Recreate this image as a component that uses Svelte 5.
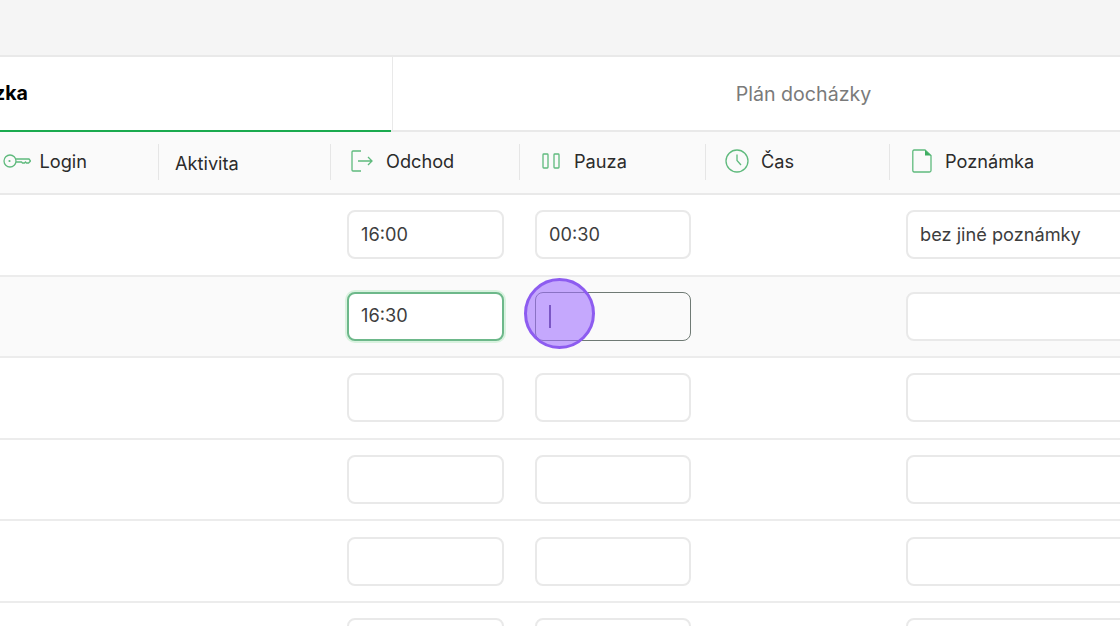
<script>
    const rows = [
        { odchod: '16:00', pauza: '00:30', note: 'bez jiné poznámky' },
        { odchod: '16:30', pauza: '', note: '', active: true },
        { odchod: '', pauza: '', note: '' },
        { odchod: '', pauza: '', note: '' },
        { odchod: '', pauza: '', note: '' },
        { odchod: '', pauza: '', note: '' }
    ];
</script>

<div class="page">
    <div class="topbar"></div>

    <div class="tabs">
        <div class="tab current"><span>Docházka</span></div>
        <div class="tab other">Plán docházky</div>
    </div>

    <div class="head cols">
        <div class="hcell login">
            <svg width="28" height="14" viewBox="0 0 28 14" fill="none" stroke="#5fba7d" stroke-width="1.3">
                <circle cx="7" cy="7" r="6" />
                <circle cx="6.500" cy="7" r="1.100" fill="#5fba7d" stroke="none" />
                <path d="M13 5H26L27.500 7L25.500 9H23.500L22.500 8L21.500 9H19.500L18.500 8H13" />
            </svg>
            <span>Login</span>
        </div>
        <div class="hcell aktivita"><span>Aktivita</span></div>
        <div class="hcell odchod">
            <svg width="22" height="22" viewBox="0 0 22 22" fill="none" stroke="#5fba7d" stroke-width="1.300">
                <path d="M10 1H2A1 1 0 0 0 1 2V20A1 1 0 0 0 2 21H10" />
                <path d="M7 11H21M17 7L21 11L17 15" />
            </svg>
            <span>Odchod</span>
        </div>
        <div class="hcell pauza">
            <svg width="18" height="16" viewBox="0 0 18 16" fill="none" stroke="#5fba7d" stroke-width="1.300">
                <rect x="1" y="1" width="5" height="14" rx="0.800" />
                <rect x="12" y="1" width="5" height="14" rx="0.800" />
            </svg>
            <span>Pauza</span>
        </div>
        <div class="hcell cas">
            <svg width="24" height="24" viewBox="0 0 24 24" fill="none" stroke="#5fba7d" stroke-width="1.300">
                <circle cx="12" cy="12" r="11" />
                <path d="M12 5.500V11.500L16 16" />
            </svg>
            <span>Čas</span>
        </div>
        <div class="hcell poznamka">
            <svg width="20" height="24" viewBox="0 0 20 24" fill="none" stroke="#5fba7d" stroke-width="1.300">
                <path d="M13 1H2A1.500 1.500 0 0 0 .8 2.500V21.500A1.500 1.500 0 0 0 2 23H17.500A1.500 1.500 0 0 0 19 21.500V6.500Z" />
                <path d="M13 1L19 6.500H13Z" fill="#3fae62" stroke="none" />
            </svg>
            <span>Poznámka</span>
        </div>
    </div>

    {#each rows as row}
        <div class="row cols" class:active={row.active}>
            <div></div>
            <div></div>
            <div class="cell">
                <input class="field" class:ok={row.active} value={row.odchod} readonly aria-label="Odchod" />
            </div>
            <div class="cell cell-pauza">
                <input class="field" class:focus={row.active} value={row.pauza} readonly aria-label="Pauza" />
                {#if row.active}
                    <span class="caret"></span>
                    <span class="click"></span>
                {/if}
            </div>
            <div></div>
            <div class="cell cell-note">
                <input class="field" value={row.note} readonly aria-label="Poznámka" />
            </div>
        </div>
    {/each}
</div>

<style>
    :global(body) {
        margin: 0;
        background: #fff;
    }

    .page {
        width: 1120px;
        height: 626px;
        overflow: hidden;
        font-family: Inter, "Liberation Sans", sans-serif;
        font-size: 18.2px;
        color: #2b2b2b;
    }

    .topbar {
        height: 55px;
        background: #f5f5f5;
        border-bottom: 2px solid #e9e9e9;
    }

    .tabs {
        display: flex;
        height: 73px;
    }

    .tab {
        display: flex;
        align-items: center;
        justify-content: center;
        color: #7a7a7a;
        font-size: 19.6px;
    }

    .tab.other {
        flex: 0 0 821px;
    }

    .tab.current {
        flex: 0 0 393px;
        justify-content: flex-end;
        overflow: hidden;
        padding-bottom: 1px;
        border-right: 1.5px solid #e9e9e9;
        box-sizing: border-box;
        color: #000;
        font-weight: 700;
    }

    .tab.current span {
        margin-right: 364px;
        white-space: nowrap;
    }

    .cols {
        display: grid;
        grid-template-columns: 158px 172px 189px 186px 184px 1fr;
    }

    .head {
        height: 61px;
        background: #fafafa;
        border-top: 2px solid #e9e9e9;
        border-bottom: 2px solid #e9e9e9;
        position: relative;
    }

    .head::before {
        content: "";
        position: absolute;
        left: 0;
        top: -2px;
        width: 391px;
        height: 2px;
        background: #1aaa4f;
    }

    .hcell {
        display: flex;
        align-items: center;
        margin: 12px 0 13px;
        padding-bottom: 2px;
        box-sizing: border-box;
        border-left: 1.5px solid #e6e6e6;
        white-space: nowrap;
    }

    .hcell svg {
        flex: none;
    }

    .login {
        border-left: none;
        padding-left: 3px;
        gap: 8.5px;
    }

    .aktivita {
        padding-left: 16px;
        padding-top: 2px;
        padding-bottom: 0;
    }

    .odchod {
        padding-left: 20px;
        gap: 13px;
    }

    .pauza {
        padding-left: 22px;
        gap: 14px;
    }

    .cas {
        padding-left: 19px;
        gap: 12px;
    }

    .poznamka {
        padding-left: 22px;
        gap: 13px;
    }

    .row {
        height: 81.6px;
        box-sizing: border-box;
        border-bottom: 2px solid #ececec;
        align-items: center;
    }

    .row.active {
        background: #fafafa;
    }

    .cell {
        position: relative;
        padding: 0 15px 0 17px;
    }

    .cell-pauza {
        padding: 0 14px 0 16px;
    }

    .cell-note {
        padding-right: 0;
        width: 320px;
    }

    .field {
        display: block;
        width: 100%;
        height: 49px;
        box-sizing: border-box;
        padding: 0 12px 2px;
        border: 2px solid #e9e9e9;
        border-radius: 8px;
        background: #fff;
        font: inherit;
        color: #3d3d3d;
        outline: none;
    }

    .field.ok {
        border-color: #6db88a;
        box-shadow: 0 0 0 2px #d9f2df;
    }

    .field.focus {
        background: #fafafa;
        border: 1.5px solid #6f7a74;
    }

    .caret {
        position: absolute;
        left: 30px;
        top: 13px;
        width: 1.5px;
        height: 23px;
        background: #4b3a75;
    }

    .click {
        position: absolute;
        left: 5px;
        top: -14px;
        width: 71px;
        height: 71px;
        box-sizing: border-box;
        border: 3px solid #8d5cf0;
        border-radius: 50%;
        background: rgba(158, 108, 255, 0.58);
    }
</style>
